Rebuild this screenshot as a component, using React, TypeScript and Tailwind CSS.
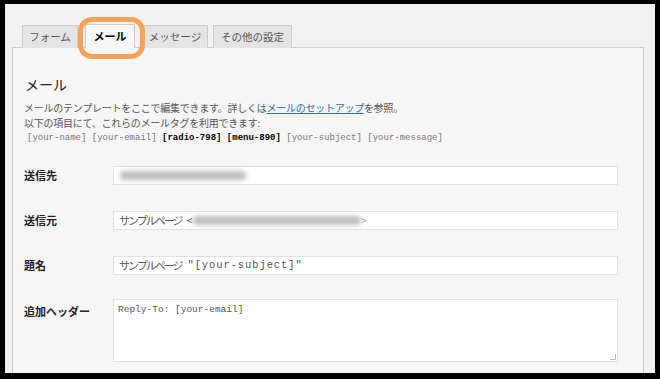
const tabs = [
    { label: "フォーム", cls: "w-[56px]" },
    { label: "メール", cls: "w-[50px] ml-[7px]" },
    { label: "メッセージ", cls: "w-[66px] ml-[7px]" },
    { label: "その他の設定", cls: "w-[79px] ml-[5px]" },
];

const Row = ({ label, children }: { label: string; children: React.ReactNode }) => (
    <div className="flex items-center">
        <div className="w-[89px] shrink-0 text-[11px] font-bold text-[#222]">{label}</div>
        {children}
    </div>
);

const Blur = ({ w }: { w: number }) => (
    <span className="inline-block h-[9px] bg-[#bdbdbd] blur-[2.5px] rounded-sm align-middle" style={{ width: w }} />
);

const App = () => {
    return (
        <div className="w-[660px] h-[379px] bg-black pt-[4px] pl-[5px] pr-[5px] pb-[6px] font-['Noto_Sans_CJK_JP',sans-serif]">
            <div className="relative h-full bg-[#f1f1f1] overflow-hidden">
                {/* tabs */}
                <div className="flex items-end pl-[17px] pt-[21px] h-[44px]">
                    {tabs.map((t, i) =>
                        i === 1 ? (
                            <div
                                key={t.label}
                                className={`${t.cls} relative z-10 h-[24px] flex items-center justify-center bg-[#f7f7f7] border border-b-0 border-[#ccc] text-[11px] font-bold text-black`}
                            >
                                {t.label}
                            </div>
                        ) : (
                            <div
                                key={t.label}
                                className={`${t.cls} h-[23px] flex items-center justify-center bg-[#e4e4e4] border border-b-0 border-[#ccc] text-[10.5px] text-[#555]`}
                            >
                                {t.label}
                            </div>
                        )
                    )}
                </div>

                {/* orange highlight */}
                <div className="absolute left-[73px] top-[13px] w-[67px] h-[42px] rounded-[14px] border-[5px] border-[#f6a359] z-20" />

                {/* panel */}
                <div className="ml-[7px] mr-[11px] -mt-px h-[330px] bg-[#f6f6f6] border border-[#cfcfcf] pl-[11px] pr-[25px] pt-[27px]">
                    <h2 className="pl-[1px] text-[14px] leading-[18px] text-[#222]">メール</h2>
                    <p className="mt-[7px] text-[10px] leading-[15px] tracking-[-0.25px] text-[#555]">
                        メールのテンプレートをここで編集できます。詳しくは
                        <span className="text-[#2a6fa8] underline">メールのセットアップ</span>
                        を参照。
                        <br />
                        以下の項目にて、これらのメールタグを利用できます:
                    </p>
                    <p className="mt-[1px] pl-[3px] text-[9px] leading-[14px] text-[#777] font-['Liberation_Mono',monospace]">
                        [your-name] [your-email] <b className="text-black">[radio-798]</b>{" "}
                        <b className="text-black">[menu-890]</b> [your-subject] [your-message]
                    </p>

                    <div className="mt-[21px] flex flex-col gap-[26px]">
                        <Row label="送信先">
                            <div className="flex-1 h-[19px] bg-white border border-[#e2e2e2] flex items-center pl-[6px]">
                                <Blur w={126} />
                            </div>
                        </Row>
                        <Row label="送信元">
                            <div className="flex-1 h-[19px] bg-white border border-[#e2e2e2] flex items-center pl-[5px] text-[#555]">
                                <span className="text-[11px] tracking-[-2px]">サンプルページ</span>
                                <span className="ml-[5px] text-[11px]">&lt;</span>
                                <Blur w={168} />
                                <span className="text-[11px] text-[#aaa]">&gt;</span>
                            </div>
                        </Row>
                        <Row label="題名">
                            <div className="flex-1 h-[19px] bg-white border border-[#e2e2e2] flex items-center pl-[5px] text-[#555]">
                                <span className="text-[11px] tracking-[-2px]">サンプルページ</span>
                                <span className="ml-[6px] text-[10.5px] tracking-[0.9px] font-['Liberation_Mono',monospace]">"[your-subject]"</span>
                            </div>
                        </Row>
                    </div>

                    <div className="mt-[24px] flex items-start">
                        <div className="w-[89px] shrink-0 pt-[4px] text-[11px] font-bold text-[#222]">追加ヘッダー</div>
                        <div className="relative flex-1 h-[63px] bg-white border border-[#e2e2e2] pl-[4px] pt-[3px] text-[9.5px] text-[#555] font-['Liberation_Mono',monospace]">
                            Reply-To: [your-email]
                            <span className="absolute right-[1px] bottom-[1px] w-[6px] h-[6px] border-r border-b border-[#bbb]" />
                        </div>
                    </div>
                </div>
            </div>
        </div>
    );
};

export default App;
